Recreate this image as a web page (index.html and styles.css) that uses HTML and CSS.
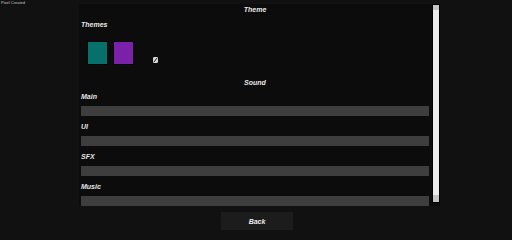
FILE: index.html
```html
<!DOCTYPE html>
<html lang="en">
<head>
<meta charset="utf-8">
<title>Settings</title>
<link rel="stylesheet" href="styles.css">
</head>
<body>
<div class="credit">Pixel Created</div>
<div class="screen">
  <div class="panel">
    <div class="content">
      <div class="title">Theme</div>
      <div class="label themes-label">Themes</div>
      <div class="swatches">
        <div class="swatch teal"></div>
        <div class="swatch purple"></div>
        <svg class="edit" width="5" height="6" viewBox="0 0 5 6">
          <rect x="0" y="0" width="5" height="6" rx="1.2" fill="#d8d8d8"/>
          <path d="M4 1 L1 5" stroke="#222" stroke-width="1"/>
        </svg>
      </div>
      <div class="title sound">Sound</div>
      <div class="group">
        <div class="label">Main</div>
        <div class="bar"></div>
      </div>
      <div class="group">
        <div class="label">UI</div>
        <div class="bar"></div>
      </div>
      <div class="group">
        <div class="label">SFX</div>
        <div class="bar"></div>
      </div>
      <div class="group">
        <div class="label">Music</div>
        <div class="bar"></div>
      </div>
    </div>
    <div class="scrollbar"><div class="thumb"></div></div>
  </div>
  <button class="back">Back</button>
</div>
</body>
</html>
```
FILE: styles.css
```css
html, body {
  margin: 0;
  padding: 0;
}
body {
  background: #111111;
  width: 512px;
  height: 235px;
  overflow: hidden;
  font-family: "Liberation Sans", Arial, sans-serif;
  color: #e6e6e6;
}
.credit {
  position: absolute;
  left: 1px;
  top: 0px;
  font-size: 4px;
  line-height: 6px;
  color: #c8c8c8;
}
.screen {
  display: flex;
  flex-direction: column;
  align-items: center;
  padding-top: 4px;
}
.panel {
  width: 361px;
  height: 202px;
  margin-left: 7px;
  display: flex;
  background: #0c0c0c;
}
.content {
  flex: 1;
  overflow: hidden;
  padding: 2px 3px 0 2px;
  display: flex;
  flex-direction: column;
}
.title, .label {
  font-size: 7px;
  line-height: 8px;
  font-weight: bold;
  font-style: italic;
  white-space: nowrap;
}
.title {
  text-align: center;
  color: #e8e8e8;
}
.themes-label {
  margin-top: 7px;
}
.swatches {
  display: flex;
  align-items: flex-end;
  gap: 5px;
  padding-left: 6px;
  margin-top: 12px;
}
.swatch {
  width: 21px;
  height: 24px;
  box-sizing: border-box;
  border: 1px solid #050505;
}
.teal { background: #08706b; }
.purple { background: #7b20a8; }
.edit {
  margin-left: 14px;
  margin-bottom: 2px;
  display: block;
}
.sound {
  margin-top: 14px;
}
.group {
  display: flex;
  flex-direction: column;
  margin-top: 6px;
}
.group + .group {
  margin-top: 7px;
}
.bar {
  margin-top: 5px;
  height: 10px;
  background: #3e3e3e;
  flex-shrink: 0;
}
.scrollbar {
  width: 8px;
  height: 199px;
  box-sizing: border-box;
  border: 1px solid #000;
  background: #c4c4c4;
  padding: 5px 0 7px;
  display: flex;
}
.thumb {
  flex: 1;
  background: #ececec;
}
.back {
  margin-top: 6px;
  margin-left: 2px;
  width: 72px;
  height: 18px;
  border: none;
  background: #1c1c1c;
  color: #eeeeee;
  font-family: "Liberation Sans", Arial, sans-serif;
  font-size: 7px;
  font-weight: bold;
  font-style: italic;
  padding: 0;
}
```
